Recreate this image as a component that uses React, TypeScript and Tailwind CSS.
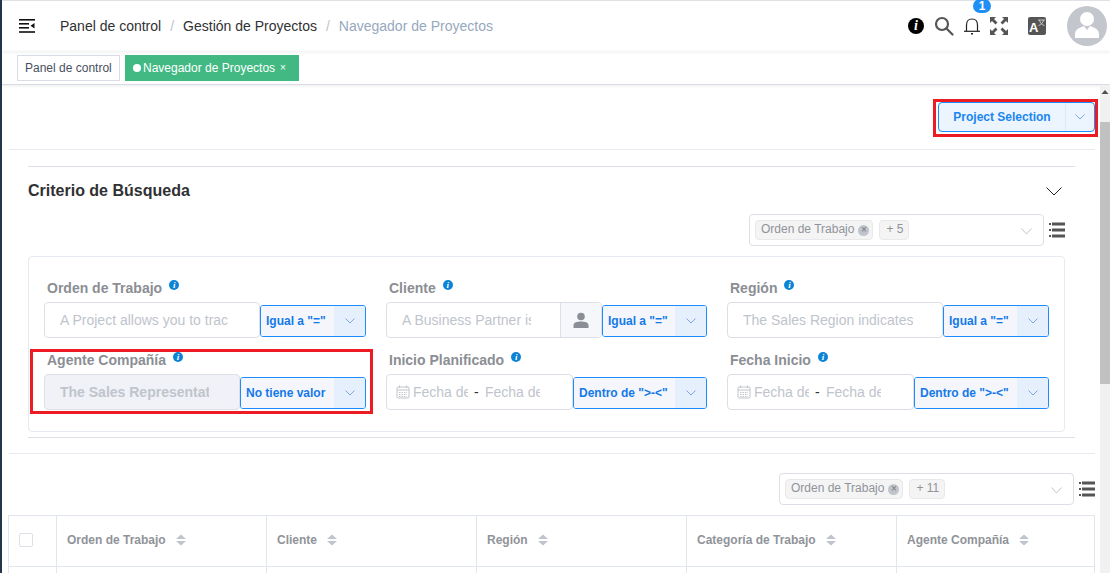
const FONT = "font-['Liberation_Sans',Arial,sans-serif]";

function Chevron({ width, height, stroke, className = '' }: { width: number; height: number; stroke: string; className?: string }) {
  return (
    <svg width={width} height={height} viewBox={`0 0 ${width} ${height}`} fill="none" stroke={stroke} strokeWidth="1" className={`shrink-0 ${className}`}>
      <path d={`M0.5 0.5 L${width / 2} ${height - 1} L${width - 0.5} 0.5`} />
    </svg>
  );
}

function InfoDot({ className = '' }: { className?: string }) {
  return (
    <span className={`inline-flex h-[10px] w-[10px] items-center justify-center rounded-full bg-[#0b84d6] font-['Liberation_Serif',serif] text-[9px] leading-none font-bold text-white italic ${className}`}>
      i
    </span>
  );
}

function ListIcon() {
  return (
    <svg width="16" height="16" viewBox="0 0 16 16" fill="#555" className="shrink-0">
      <rect x="0" y="1" width="2" height="2" />
      <rect x="3" y="0.5" width="13" height="3" />
      <rect x="0" y="7" width="2" height="2" />
      <rect x="3" y="6.5" width="13" height="3" />
      <rect x="0" y="13" width="2" height="2" />
      <rect x="3" y="12.5" width="13" height="3" />
    </svg>
  );
}

function SortIcon() {
  return (
    <svg width="10" height="12" viewBox="0 0 10 12" fill="#c0c4cc" className="shrink-0">
      <path d="M5 0.5 L10 5 H0 Z" />
      <path d="M5 11.5 L10 7 H0 Z" />
    </svg>
  );
}

function CalendarIcon() {
  return (
    <svg width="14" height="14" viewBox="0 0 14 14" fill="none" stroke="#c0c4cc" strokeWidth="1" className="shrink-0">
      <rect x="1" y="2" width="12" height="11" rx="1" />
      <path d="M1 5 H13 M3.5 0.5 V3 M10.5 0.5 V3" />
      <path d="M3 7.5 H11 M3 9.5 H11 M3 11.5 H11" strokeDasharray="1.5 1" />
    </svg>
  );
}

function OperatorSelect({ label, width }: { label: string; width: string }) {
  return (
    <div className={`mt-[3px] flex h-[32px] shrink-0 overflow-hidden rounded-[3px] border border-[#1a8cff] ${width}`}>
      <div className="flex flex-1 items-center overflow-hidden bg-[#f4f6fb] pl-[5px] text-[12px] font-bold whitespace-nowrap text-[#1479e8]">
        {label}
      </div>
      <div className="flex w-[31px] shrink-0 items-center justify-center bg-[#e6f0fc]">
        <Chevron width={10} height={6} stroke="#7ba7e6" />
      </div>
    </div>
  );
}

function Label({ text }: { text: string }) {
  return (
    <div className="flex h-[24px] items-start pl-[3px]">
      <span className="text-[14px] leading-[20px] font-bold text-[#8b8e94]">{text}</span>
      <InfoDot className="mt-[2px] ml-[7px]" />
    </div>
  );
}

function TextBox({ text, width, clip, disabled = false, suffix = false }: { text: string; width: string; clip: string; disabled?: boolean; suffix?: boolean }) {
  return (
    <div className={`flex h-[36px] shrink-0 items-center overflow-hidden rounded-[4px] border border-[#dcdfe6] ${disabled ? 'bg-[#f0f2f7]' : 'bg-white'} ${width}`}>
      <span className={`ml-[15px] overflow-hidden text-[14px] whitespace-nowrap ${disabled ? 'font-bold text-[#c0c4cc]' : 'text-[#c0c4cc]'} ${clip}`}>{text}</span>
      {suffix && (
        <span className="ml-auto flex h-full w-[41px] items-center justify-center border-l border-[#dcdfe6] bg-[#f5f7fa]">
          <svg width="16" height="16" viewBox="0 0 16 16" fill="#8b8e94">
            <circle cx="8" cy="4.5" r="3.8" />
            <path d="M0.5 16 V13 C0.5 10.5 4 9.5 8 9.5 C12 9.5 15.5 10.5 15.5 13 V16 Z" />
          </svg>
        </span>
      )}
    </div>
  );
}

function DateRange({ width }: { width: string }) {
  return (
    <div className={`flex h-[36px] shrink-0 items-center overflow-hidden rounded-[4px] border border-[#dcdfe6] bg-white pl-[9px] ${width}`}>
      <CalendarIcon />
      <span className="ml-[3px] w-[55px] overflow-hidden text-[14px] whitespace-nowrap text-[#c0c4cc]">Fecha de</span>
      <span className="mx-[6px] w-[5px] text-[14px] text-[#303133]">-</span>
      <span className="w-[55px] overflow-hidden text-[14px] whitespace-nowrap text-[#c0c4cc]">Fecha de</span>
    </div>
  );
}

function ColumnPicker({ first, more }: { first: string; more: string }) {
  return (
    <div className="flex items-center gap-[5px]">
      <div className="flex h-[32px] w-[295px] items-center rounded-[4px] border border-[#dcdfe6] bg-white pl-[5px]">
        <span className="flex h-[20px] items-center gap-[4px] rounded-[4px] border border-[#e9e9eb] bg-[#f4f4f5] pr-[3px] pb-[2px] pl-[5px] text-[12px] text-[#909399]">
          {first}
          <span className="mt-[2px] flex h-[11px] w-[11px] items-center justify-center rounded-full bg-[#c0c4cc] text-[10px] leading-none text-[#777]">×</span>
        </span>
        <span className="ml-[6px] flex h-[20px] items-center rounded-[4px] border border-[#e9e9eb] bg-[#f4f4f5] pr-[5px] pb-[2px] pl-[6px] text-[12px] text-[#909399]">{more}</span>
        <Chevron width={11} height={7} stroke="#c0c4cc" className="mt-[2px] mr-[11px] ml-auto" />
      </div>
      <ListIcon />
    </div>
  );
}

function HeaderCell({ text, last = false }: { text: string; last?: boolean }) {
  return (
    <div className={`flex items-center gap-[10px] border-l border-[#e1e6ec] pb-[2px] pl-[10px] text-[12px] font-bold text-[#909399] ${last ? 'border-r' : ''}`}>
      {text}
      <SortIcon />
    </div>
  );
}

const columns = ['Orden de Trabajo', 'Cliente', 'Región', 'Categoría de Trabajo'];

export default function App() {
  return (
    <div className={`flex h-[573px] w-[1110px] overflow-hidden bg-white ${FONT}`}>
      <div className="w-[2px] shrink-0 bg-[#24364a]" />
      <div className="flex min-w-0 flex-1 flex-col">
        {/* navbar */}
        <header className="relative z-10 flex h-[51px] shrink-0 items-center border-t border-[#dfe1e4] shadow-[0_1px_4px_rgba(0,21,41,0.08)]">
          <svg width="16" height="14" viewBox="0 0 16 14" className="ml-[17px]" fill="#111">
            <rect x="0" y="0" width="16" height="1.6" />
            <rect x="0" y="4" width="10" height="1.6" />
            <rect x="0" y="8" width="10" height="1.6" />
            <rect x="0" y="12.2" width="16" height="1.6" />
            <path d="M15.5 4 V9.5 L11.5 6.8 Z" />
          </svg>
          <nav className="ml-[25px] flex items-center text-[14px] text-[#303133]">
            <span>Panel de control</span>
            <span className="mx-[9px] text-[#c0c4cc]">/</span>
            <span>Gestión de Proyectos</span>
            <span className="mx-[9px] text-[#c0c4cc]">/</span>
            <span className="text-[#97a8be]">Navegador de Proyectos</span>
          </nav>
          <div className="ml-auto flex items-center pr-[3px]">
            <span className="flex h-[16px] w-[16px] items-center justify-center rounded-full bg-black font-['Liberation_Serif',serif] text-[14px] leading-none font-bold text-white italic">i</span>
            <svg width="20" height="20" viewBox="0 0 20 20" fill="none" stroke="#555" strokeWidth="2.2" className="ml-[10px]">
              <circle cx="8" cy="8" r="6" />
              <path d="M12.5 12.5 L18.5 18.5" strokeLinecap="round" />
            </svg>
            <div className="relative ml-[9px] h-[18px] w-[18px]">
              <svg width="18" height="18" viewBox="0 0 18 18" fill="none" stroke="#222" strokeWidth="1.2">
                <path d="M3.5 14 V8 C3.5 4.5 5.5 2 9 2 C12.5 2 14.5 4.5 14.5 8 V14" />
                <path d="M1 14.3 H17" />
                <path d="M8 16.8 H10" strokeWidth="1.5" />
              </svg>
              <span className="absolute top-[-18px] left-[10px] flex h-[14px] w-[18px] items-center justify-center rounded-full bg-[#1f8ff5] text-[12px] leading-none font-bold text-white">1</span>
            </div>
            <svg width="18" height="18" viewBox="0 0 18 18" fill="#555" className="ml-[9px]">
              <path d="M0 0 H6 L4 2 L7.5 5.5 L5.5 7.5 L2 4 L0 6 Z" />
              <path d="M18 0 H12 L14 2 L10.5 5.5 L12.5 7.5 L16 4 L18 6 Z" />
              <path d="M0 18 H6 L4 16 L7.5 12.5 L5.5 10.5 L2 14 L0 12 Z" />
              <path d="M18 18 H12 L14 16 L10.5 12.5 L12.5 10.5 L16 14 L18 12 Z" />
            </svg>
            <div className="relative ml-[20px] flex h-[18px] w-[18px] items-end overflow-hidden rounded-[2px] bg-[#555] pb-[1px] pl-[1px] text-[13px] leading-none font-bold text-white">
              A
              <svg width="7" height="7" viewBox="0 0 7 7" fill="none" stroke="#ddd" strokeWidth="0.8" className="absolute top-[2px] right-[1px]">
                <path d="M0 1 H7 M1.5 1 C2 4 4 6 6.5 6.5 M5.5 1 C5 4 3 6 0.5 6.5" />
              </svg>
            </div>
            <div className="ml-[21px] flex h-[40px] w-[40px] items-end justify-center overflow-hidden rounded-full bg-[#c3c6cd]">
              <svg width="24" height="30" viewBox="0 0 24 30" fill="#fff" className="mb-[5px]">
                <circle cx="12" cy="8" r="7" />
                <path d="M0 27 V23 C0 18 6 16 9 15 L12 19 L15 15 C18 16 24 18 24 23 V27 Z" />
              </svg>
            </div>
          </div>
        </header>

        {/* tags view */}
        <div className="flex h-[34px] shrink-0 items-start gap-[5px] border-b border-[#d8dce5] pt-[4px] pl-[15px] shadow-[0_1px_3px_rgba(0,0,0,0.08)]">
          <span className="flex h-[26px] w-[103px] items-center border border-[#d8dce5] pl-[7px] text-[12px] whitespace-nowrap text-[#495060]">Panel de control</span>
          <span className="flex h-[26px] w-[174px] items-center bg-[#42b983] pl-[8px] text-[12px] whitespace-nowrap text-white">
            <span className="mr-[2px] h-[8px] w-[8px] rounded-full bg-white" />
            Navegador de Proyectos
            <span className="ml-[5px] text-[10px] leading-none">×</span>
          </span>
        </div>

        <div className="flex min-h-0 flex-1">
          <main className="min-w-0 flex-1 pr-[5px] pl-[7px]">
            <div className="flex justify-end border-b border-[#e6ebf1] pt-[17px] pb-[17px]">
              <div className="relative">
                <div className="flex h-[30px] w-[157px] overflow-hidden rounded-[4px] border border-[#1a8cff] bg-[#ecf4fe]">
                  <span className="flex flex-1 items-center justify-center text-[12px] font-bold text-[#1a86f0]">Project Selection</span>
                  <span className="flex w-[29px] items-center justify-center border-l border-[#dfe9f6]">
                    <Chevron width={10} height={6} stroke="#7ba7e6" />
                  </span>
                </div>
                <div className="pointer-events-none absolute top-[-3px] right-[-3px] bottom-[-5px] left-[-5px] border-[3px] border-[#ed1c24]" />
              </div>
            </div>

            <section className="mt-[16px] mr-[20px] ml-[19px] border-y border-[#dcdfe6]">
              <div className="flex h-[47px] items-start pt-[15px] pr-[10px]">
                <h2 className="text-[16px] leading-[18px] font-bold text-[#303133]">Criterio de Búsqueda</h2>
                <Chevron width={16} height={9} stroke="#222" className="mt-[5px] mr-[3px] ml-auto" />
              </div>
              <div className="mr-[10px] flex justify-end">
                <ColumnPicker first="Orden de Trabajo" more="+ 5" />
              </div>
              <div className="mt-[10px] mr-[10px] mb-[5px] h-[176px] rounded-[4px] border border-[#e6ebf1] pt-[21px] pl-[15px]">
                <div className="grid grid-cols-[342px_341px_322px] gap-y-[12px]">
                  <div>
                    <Label text="Orden de Trabajo" />
                    <div className="flex w-[322px] items-start">
                      <TextBox text="A Project allows you to trac" width="w-[216px]" clip="w-[170px]" />
                      <OperatorSelect label={'Igual a "="'} width="w-[106px]" />
                    </div>
                  </div>
                  <div>
                    <Label text="Cliente" />
                    <div className="flex w-[321px] items-start">
                      <TextBox text="A Business Partner is" width="w-[216px]" clip="w-[129px]" suffix />
                      <OperatorSelect label={'Igual a "="'} width="w-[105px]" />
                    </div>
                  </div>
                  <div>
                    <Label text="Región" />
                    <div className="flex w-[322px] items-start">
                      <TextBox text="The Sales Region indicates" width="w-[216px]" clip="w-[170px]" />
                      <OperatorSelect label={'Igual a "="'} width="w-[106px]" />
                    </div>
                  </div>
                  <div className="relative">
                    <Label text="Agente Compañía" />
                    <div className="flex w-[322px] items-start">
                      <TextBox text="The Sales Representat" width="w-[196px]" clip="w-[149px]" disabled />
                      <OperatorSelect label="No tiene valor" width="w-[126px]" />
                    </div>
                    <div className="pointer-events-none absolute top-[-1px] right-[13px] bottom-[-4px] left-[-14px] border-[3px] border-[#ed1c24]" />
                  </div>
                  <div>
                    <Label text="Inicio Planificado" />
                    <div className="flex w-[321px] items-start">
                      <DateRange width="w-[187px]" />
                      <OperatorSelect label={'Dentro de ">-<"'} width="w-[134px]" />
                    </div>
                  </div>
                  <div>
                    <Label text="Fecha Inicio" />
                    <div className="flex w-[322px] items-start">
                      <DateRange width="w-[187px]" />
                      <OperatorSelect label={'Dentro de ">-<"'} width="w-[135px]" />
                    </div>
                  </div>
                </div>
              </div>
            </section>

            <div className="mt-[15px] border-t border-[#e6ebf1] pt-[19px]">
              <div className="flex justify-end">
                <ColumnPicker first="Orden de Trabajo" more="+ 11" />
              </div>
              <div className="mt-[10px] -ml-[1px] grid grid-cols-[48px_210px_210px_210px_210px_199px] grid-rows-[50px_40px] border-t border-[#e1e6ec]">
                <div className="flex items-center border-l border-[#e1e6ec] pb-[2px] pl-[10px]">
                  <span className="h-[14px] w-[14px] rounded-[2px] border border-[#dcdfe6] bg-white" />
                </div>
                {columns.map((c) => (
                  <HeaderCell key={c} text={c} />
                ))}
                <HeaderCell text="Agente Compañía" last />
                {[0, 1, 2, 3, 4].map((i) => (
                  <div key={i} className="border-t border-l border-[#e1e6ec]" />
                ))}
                <div className="border-x border-t border-[#e1e6ec]" />
              </div>
            </div>
          </main>

          {/* scrollbar */}
          <div className="flex w-[10px] shrink-0 flex-col bg-[#f1f1f1]">
            <svg width="10" height="12" viewBox="0 0 10 12" fill="#505050" className="mt-[3px] shrink-0">
              <path d="M5 2 L8.5 6 H1.5 Z" />
            </svg>
            <div className="mt-[22px] h-[262px] w-full bg-[#c1c1c1]" />
          </div>
        </div>
      </div>
    </div>
  );
}
